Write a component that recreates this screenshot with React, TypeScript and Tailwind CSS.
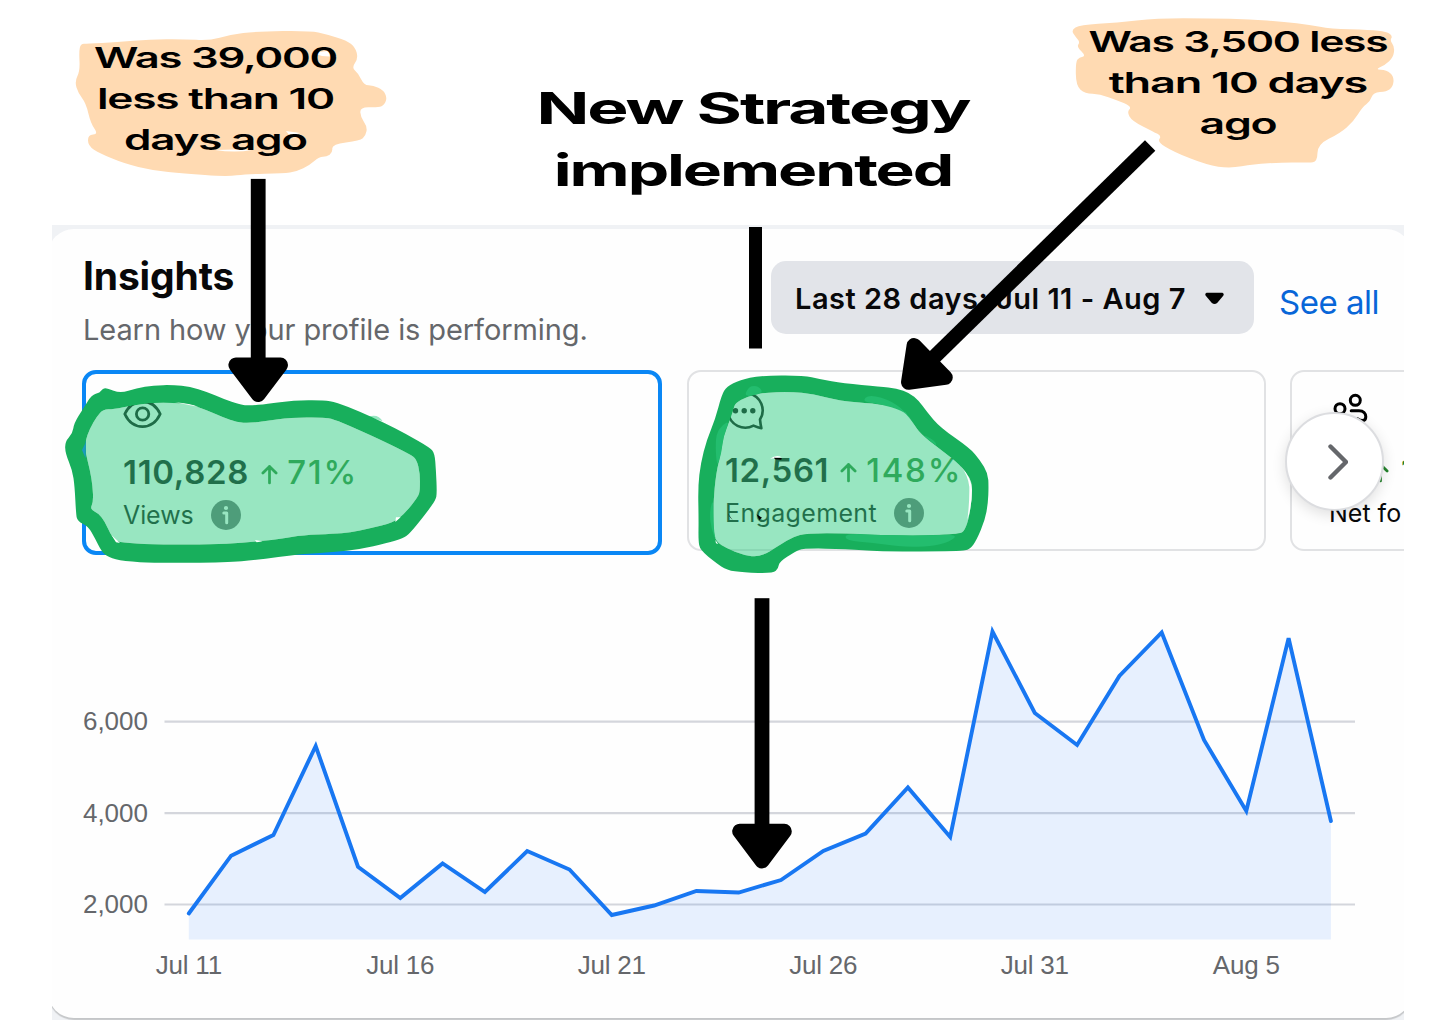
import { type ReactNode } from "react";

type Point = [number, number];

const DAILY_VIEWS = [
  1803, 3067, 3520, 5468, 2827, 2142, 2897, 2273, 3170, 2766, 1770, 1978, 2295, 2262,
  2536, 3170, 3553, 4560, 3477, 7973, 6190, 5490, 7000, 7951, 5599, 4046, 7830, 3827,
];

const X_LABELS = [
  { day: 0, label: "Jul 11" },
  { day: 5, label: "Jul 16" },
  { day: 10, label: "Jul 21" },
  { day: 15, label: "Jul 26" },
  { day: 20, label: "Jul 31" },
  { day: 25, label: "Aug 5" },
];

const VIEWS_OUTER: Point[] = [
  [188, 505], [202, 504], [240, 520], [290, 505], [340, 496], [400, 495], [450, 500], [500, 515], [550, 537],
  [600, 554], [630, 557], [680, 552], [760, 541], [850, 540], [890, 547], [960, 575], [1030, 607], [1100, 643],
  [1170, 683], [1184, 700], [1188, 750], [1191, 820], [1187, 840], [1160, 878], [1110, 940], [1090, 955],
  [1040, 970], [960, 988], [880, 997], [780, 1002], [650, 1020], [560, 1027], [350, 1029], [250, 1024],
  [205, 1012], [185, 995], [165, 955], [145, 920], [112, 903], [108, 880], [104, 800], [97, 750], [76, 700],
  [75, 665], [98, 640], [102, 610], [130, 565], [155, 525], [180, 518],
];
const VIEWS_INNER: Point[] = [
  [190, 568], [220, 568], [280, 556], [340, 548], [400, 548], [450, 553], [500, 570], [550, 592], [590, 607],
  [630, 609], [680, 603], [750, 593], [850, 592], [880, 597], [940, 622], [1040, 668], [1110, 703], [1130, 718],
  [1140, 760], [1140, 810], [1135, 830], [1095, 880], [1060, 908], [990, 925], [930, 938], [880, 942],
  [790, 945], [720, 957], [620, 968], [500, 975], [240, 972], [215, 950], [195, 905], [175, 880], [150, 868],
  [160, 845], [158, 800], [150, 750], [137, 700], [135, 665], [150, 625], [170, 590],
];
const ENGAGEMENT_OUTER: Point[] = [
  [240, 467], [370, 466], [420, 478], [490, 490], [600, 500], [650, 505], [690, 520], [715, 540], [740, 575],
  [780, 622], [870, 685], [900, 720], [924, 760], [926, 800], [924, 850], [915, 900], [890, 960], [870, 988],
  [840, 994], [600, 995], [500, 987], [370, 985], [345, 995], [298, 1025], [295, 1045], [280, 1060],
  [190, 1058], [140, 1050], [110, 1030], [60, 990], [55, 960], [56, 900], [54, 800], [62, 730], [80, 660],
  [105, 600], [125, 525], [140, 500], [180, 480],
];
const ENGAGEMENT_INNER: Point[] = [
  [165, 550], [200, 530], [250, 518], [330, 515], [400, 522], [480, 543], [580, 550], [650, 562], [675, 575],
  [700, 610], [720, 640], [770, 680], [830, 725], [860, 760], [875, 785], [877, 820], [868, 890], [855, 930],
  [840, 942], [720, 947], [600, 945], [500, 940], [380, 940], [340, 950], [300, 975], [240, 1012], [190, 1005],
  [140, 985], [108, 965], [100, 930], [100, 850], [108, 760], [125, 690], [130, 650], [150, 600], [160, 570],
];
const ENGAGEMENT_PATCHES: Point[][] = [
  [[495, 940], [600, 945], [720, 947], [835, 943], [810, 965], [750, 981], [650, 979], [580, 968], [498, 962]],
  [[107, 700], [108, 640], [130, 612], [148, 604], [130, 650], [124, 700], [112, 740]],
  [[192, 532], [205, 502], [225, 496], [242, 505], [248, 520]],
  [[545, 545], [568, 522], [640, 545], [685, 585], [712, 625], [690, 595], [668, 572], [600, 552]],
  [[95, 930], [88, 880], [100, 830], [101, 930], [108, 962]],
  [[722, 640], [765, 662], [772, 682]],
];
const LEFT_BLOB: Point[] = [
  [92, 102], [112, 101], [200, 97], [300, 88], [400, 87], [478, 92], [540, 74], [620, 64], [780, 62], [830, 73],
  [890, 92], [915, 110], [925, 145], [905, 173], [925, 190], [942, 225], [970, 227], [1000, 240], [1012, 265],
  [1000, 288], [980, 292], [930, 292], [932, 322], [952, 350], [947, 378], [930, 392], [846, 403], [848, 428],
  [830, 440], [808, 440], [780, 465], [740, 485], [700, 490], [590, 492], [530, 500], [400, 490], [310, 482],
  [220, 460], [150, 430], [114, 408], [114, 374], [145, 373], [122, 340], [108, 280], [85, 250], [74, 215],
  [90, 183], [87, 125],
];
const RIGHT_BLOB: Point[] = [
  [63, 60], [90, 45], [200, 38], [320, 25], [480, 25], [600, 28], [700, 35], [780, 44], [840, 56], [960, 60],
  [1010, 65], [1028, 78], [1020, 92], [1034, 110], [1030, 142], [1005, 165], [975, 179], [1010, 179],
  [1032, 200], [1029, 230], [1010, 245], [970, 247], [960, 275], [938, 290], [910, 335], [870, 370], [803, 403],
  [802, 455], [775, 458], [700, 457], [610, 463], [540, 475], [470, 465], [370, 425], [322, 395], [335, 378],
  [310, 365], [245, 332], [231, 305], [246, 290], [200, 270], [150, 253], [105, 250], [78, 228], [77, 155],
  [88, 142], [108, 138], [80, 110], [90, 97], [78, 82],
];

// closed curve that runs through the midpoints of the given outline
function smooth(points: Point[]): string {
  const mid = (a: Point, b: Point) => `${(a[0] + b[0]) / 2} ${(a[1] + b[1]) / 2}`;
  const start = mid(points[points.length - 1], points[0]);
  const curves = points.map((p, i) => `Q${p[0]} ${p[1]} ${mid(p, points[(i + 1) % points.length])}`);
  return `M${start}${curves.join("")}Z`;
}

function EyeIcon() {
  return (
    <svg viewBox="0 0 40 40" className="size-10" fill="none" stroke="currentColor" strokeWidth="2.8">
      <path d="M1.8 20C5.500 12.300 12 7.500 19.500 7.500S33.500 12.300 37.200 20C33.500 28 27 32.600 19.500 32.600S5.500 28 1.800 20Z" strokeLinejoin="round" />
      <circle cx="19.600" cy="20" r="6.200" />
    </svg>
  );
}

function CommentIcon() {
  return (
    <svg viewBox="0 0 40 40" className="size-10" fill="none" stroke="currentColor" strokeWidth="2.600">
      <path d="M35 27.500A17.300 17.300 0 1 0 28.500 33.600Q33 35.500 36.400 36.300Q35.500 32.500 35 27.500Z" strokeLinejoin="round" />
      <g fill="currentColor" stroke="none">
        <circle cx="10.500" cy="18.800" r="2.700" />
        <circle cx="19.200" cy="18.800" r="2.700" />
        <circle cx="27.800" cy="18.800" r="2.700" />
      </g>
    </svg>
  );
}

function PeopleIcon() {
  return (
    <svg viewBox="0 0 40 40" className="size-10" fill="none" stroke="currentColor" strokeWidth="3" strokeLinecap="round">
      <circle cx="11" cy="16.700" r="5" />
      <circle cx="26.300" cy="8.300" r="5" />
      <path d="M22.200 18.700H30C34.500 18.700 36.800 21.500 36.800 24.800C36.800 27.700 35 28.500 33.500 28.500C31.500 28.500 30 27.800 28.500 26.700" />
    </svg>
  );
}

function UpArrow() {
  return (
    <svg viewBox="0 0 18 22" className="mt-1 h-[21px] w-[17px]" fill="none" stroke="currentColor" strokeWidth="2.900" strokeLinecap="round" strokeLinejoin="round">
      <path d="M9 20V2.500M2 9.500L9 2.500L16 9.500" />
    </svg>
  );
}

function InfoIcon() {
  return (
    <svg viewBox="0 0 30 30" className="size-[30px]">
      <circle cx="15" cy="15" r="15" fill="#65676b" />
      <circle cx="15" cy="8" r="2.100" fill="#fff" />
      <path d="M12.800 13H15.700V22.800" fill="none" stroke="#fff" strokeWidth="3" strokeLinecap="round" strokeLinejoin="round" />
    </svg>
  );
}

interface StatCardProps {
  icon: ReactNode;
  value: ReactNode;
  change: ReactNode;
  label: ReactNode;
  className: string;
}

function StatCard({ icon, value, change, label, className }: StatCardProps) {
  return (
    <div className={`flex flex-shrink-0 flex-col rounded-[14px] pt-5 ${className}`}>
      {icon}
      <div className="mt-5 flex h-9 items-center">
        <span className="text-[33px] font-semibold leading-9 text-[#080809]">{value}</span>
        <span className="flex items-center text-[33px] font-medium leading-9 text-[#24832c]">{change}</span>
      </div>
      <div className="mt-[10px] flex h-[30px] items-center text-[25px] leading-[30px] text-[#080809]">{label}</div>
    </div>
  );
}

function ViewsChart() {
  const x = (day: number) => 136.8 + day * 42.3;
  const y = (value: number) => 314.5 - ((value - 2000) / 2000) * 91.4;
  const line = DAILY_VIEWS.map((v, i) => `${x(i).toFixed(1)},${y(v).toFixed(1)}`).join(" ");

  return (
    <svg viewBox="0 0 1352 420" className="h-[420px] w-[1352px]" fontFamily="'Liberation Sans', Arial, sans-serif" fontSize="26" fill="#65676b">
      {[6000, 4000, 2000].map((v) => (
        <g key={v}>
          <line x1="112.5" x2="1303" y1={y(v)} y2={y(v)} stroke="#d4d6dc" strokeWidth="2.2" />
          <text x="96" y={y(v) + 8.5} textAnchor="end">{v.toLocaleString("en-US")}</text>
        </g>
      ))}
      <polygon points={`${x(0)},349.5 ${line} ${x(27)},349.5`} fill="#1f74ff" fillOpacity="0.1" />
      <polyline points={line} fill="none" stroke="#1877f2" strokeWidth="3.9" strokeLinecap="round" strokeMiterlimit="4" />
      {X_LABELS.map(({ day, label }) => (
        <text key={label} x={x(day)} y="384" textAnchor="middle" letterSpacing="-0.2">{label}</text>
      ))}
    </svg>
  );
}

// tip of the arrow sits at 0,0 and it points down
function Arrow({ tip, length, angle = 0 }: { tip: Point; length: number; angle?: number }) {
  return (
    <g transform={`translate(${tip[0]} ${tip[1]}) rotate(${angle})`}>
      <rect x="-7.4" y={-length} width="14.8" height={length - 30} />
      <polygon points="-22.3,-37.9 22.3,-37.9 0,-8.3" stroke="#000" strokeWidth="15" strokeLinejoin="round" />
    </g>
  );
}

function Annotations() {
  return (
    <svg viewBox="0 0 1456 1020" className="pointer-events-none absolute inset-0 h-[1020px] w-[1456px]">
      <g fill="#ffdab2">
        <path d={smooth(LEFT_BLOB)} transform="translate(50 10) scale(.3333)" />
        <path d={smooth(RIGHT_BLOB)} transform="translate(1050 10) scale(.3333)" />
      </g>
      <path d="M312 53L327 51L337 57L322 56ZM286 131L300 133L290 136ZM215 150Q235 153 252 150Q235 149 215 150Z" fill="#fff" />
      <g transform="translate(40 220) scale(.3333)">
        <path d={smooth(VIEWS_INNER)} fill="#3acf88" fillOpacity="0.52" />
        <path d="M985 590Q1015 580 1028 604Z" fill="#97e6c1" />
        <path d={smooth(VIEWS_OUTER) + smooth(VIEWS_INNER)} fillRule="evenodd" fill="#18af5c" />
        <path d="M405 547Q450 550 476 561Q440 554 405 547ZM215 946L240 969L228 967ZM645 960L668 964L650 967ZM1068 892L1082 892L1066 906Z" fill="#fff" />
        <path d="M137 668L137 715L126 690Z" fill="#1a9bc0" />
      </g>
      <g transform="translate(680 220) scale(.3333)">
        <path d={smooth(ENGAGEMENT_INNER)} fill="#3acf88" fillOpacity="0.52" />
        <path d={smooth(ENGAGEMENT_OUTER) + smooth(ENGAGEMENT_INNER)} fillRule="evenodd" fill="#18af5c" />
        {ENGAGEMENT_PATCHES.map((patch, i) => (
          <path key={i} d={smooth(patch)} fill="#23bd6e" />
        ))}
        <path d="M842 738Q876 775 876 810Q876 860 862 900Q869 850 868 800Q864 765 842 738ZM270 716Q290 702 305 712ZM106 960L115 972L108 970Z" fill="#fff" />
        <path d="M282 713L305 714L304 719L285 718ZM143 880L158 900L150 892ZM230 883L246 893L238 900Z" />
      </g>
      <Arrow tip={[258.2, 402.9]} length={224} />
      <Arrow tip={[762, 869.2]} length={271} />
      <Arrow tip={[902.6, 388]} length={346.5} angle={45.6} />
      <rect x="749" y="227" width="13" height="121.5" />
    </svg>
  );
}

export default function App() {
  return (
    <div className="relative h-[1020px] w-[1456px] overflow-hidden bg-white font-['Inter',sans-serif] text-black">
      <header className="relative z-10 flex h-[225px] items-start whitespace-nowrap text-center">
        <div className="ml-[60px] w-[311px] pt-[37px] text-[28.4px] font-semibold leading-[41px] tracking-[-0.8px]">
          <div className="scale-x-[1.535]">Was 39,000</div>
          <div className="scale-x-[1.56]">less than 10</div>
          <div className="scale-x-[1.55]">days ago</div>
        </div>
        <h1 className="ml-[132px] w-[500px] pt-[76.5px] text-[44.5px] font-bold leading-[62.7px] tracking-[-1.4px]">
          <div className="scale-x-[1.56]">New Strategy</div>
          <div className="scale-x-[1.48]">implemented</div>
        </h1>
        <div className="ml-[85px] w-[300px] pt-[21px] text-[28.4px] font-semibold leading-[41px] tracking-[-0.8px]">
          <div className="scale-x-[1.5]">Was 3,500 less</div>
          <div className="scale-x-[1.59]">than 10 days</div>
          <div className="scale-x-[1.57]">ago</div>
        </div>
      </header>

      <main className="ml-[52px] h-[795px] w-[1352px] overflow-hidden bg-[#f0f2f5] pt-1">
        <section className="-ml-1 flex h-[789px] w-[1364px] flex-col rounded-[26px] bg-[#fefefe] pl-1 shadow-[0_2px_1px_rgba(0,0,0,0.18)]">
          <div className="flex h-[141px] items-start pl-[31px]">
            <div className="w-[688px] pt-[22.5px]">
              <h2 className="text-[39px] font-bold leading-[48px] tracking-[-0.15px] text-[#080809]">Insights</h2>
              <p className="mt-3 text-[29px] leading-9 tracking-[-0.09px] text-[#65676b]">Learn how your profile is performing.</p>
            </div>
            <button className="mt-8 flex h-[73px] w-[483px] items-center whitespace-nowrap rounded-[15px] bg-[#e2e4e9] pl-6 pt-0.5 text-[29px] font-semibold tracking-[0.48px] text-[#080809]">
              Last 28 days: Jul 11 - Aug 7
              <svg viewBox="0 0 18 12" className="ml-[19px] h-[13px] w-[19px]">
                <path d="M1.500 0.500H16.500Q18.500 1.500 17.300 3.300L11.500 10.200Q9 12.400 6.500 10.200L0.700 3.300Q-0.500 1.500 1.500 0.500Z" />
              </svg>
            </button>
            <a className="ml-[25px] mt-[55px] whitespace-nowrap text-[33px] leading-9 tracking-[-0.5px] text-[#0866d8]">See all</a>
          </div>

          <div className="relative flex w-[1352px] items-start overflow-hidden pl-[30px]">
            <StatCard
              className="h-[185px] w-[580px] border-4 border-[#0a87f5] pl-[37px]"
              icon={<EyeIcon />}
              value={<span className="tracking-[0.7px]">110,828</span>}
              change={<><span className="ml-3 mr-[9px] flex"><UpArrow /></span><span className="tracking-[1.9px]">71%</span></>}
              label={<><span className="mr-[17px] tracking-[-0.1px]">Views</span><InfoIcon /></>}
            />
            <StatCard
              className="ml-[25px] h-[181px] w-[579px] border-2 border-[#e1e2e4] pl-[36px]"
              icon={<CommentIcon />}
              value={<span className="tracking-[0.6px]">12,561</span>}
              change={<><span className="ml-[11px] mr-[9px] flex"><UpArrow /></span><span className="tracking-[1.8px]">148%</span></>}
              label={<><span className="mr-[17px] tracking-[0.35px]">Engagement</span><InfoIcon /></>}
            />
            <StatCard
              className="ml-6 h-[181px] w-[580px] border-2 border-[#e1e2e4] pl-[37px]"
              icon={<PeopleIcon />}
              value={null}
              change={<><span className="ml-[43px] mr-3 flex"><UpArrow /></span>1</>}
              label="Net fo"
            />
            <button className="absolute left-[1233px] top-[42px] flex size-[99px] items-center justify-center rounded-full border-2 border-[#dcdde0] bg-white shadow-[0_4px_14px_rgba(0,0,0,0.12)]">
              <svg viewBox="0 0 20 36" className="ml-1.5 h-9 w-5" fill="none" stroke="#65676b" strokeWidth="4.400" strokeLinecap="round" strokeLinejoin="round">
                <path d="M2.500 2.500L18 18L2.500 33.500" />
              </svg>
            </button>
          </div>

          <div className="mt-[35px]">
            <ViewsChart />
          </div>
        </section>
      </main>

      <Annotations />
    </div>
  );
}
